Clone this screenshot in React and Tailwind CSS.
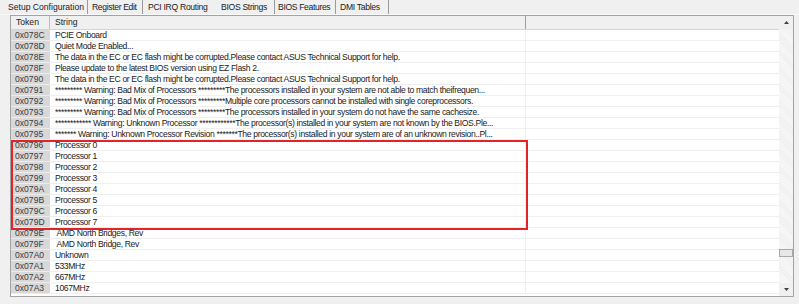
const tabs = [
  ['Setup Configuration', 'w-[83px] pl-[3px]'],
  ['Register Edit', 'w-[55px] pl-[4px] tracking-[-0.35px]'],
  ['PCI IRQ Routing', 'w-[72px] pl-[5px] tracking-[-0.3px]'],
  ['BIOS Strings', 'w-[60px] pl-[6px] tracking-[-0.3px]'],
  ['BIOS Features', 'w-[61px] pl-[3px] tracking-[-0.35px]'],
  ['DMI Tables', 'w-[53px] pl-[4px] tracking-[-0.3px]'],
];

const rows = [
  ['0x078C', 'PCIE Onboard'],
  ['0x078D', 'Quiet Mode Enabled...'],
  ['0x078E', 'The data in the EC or EC flash might be corrupted.Please contact ASUS Technical Support for help.'],
  ['0x078F', 'Please update to the latest BIOS version using EZ Flash 2.'],
  ['0x0790', 'The data in the EC or EC flash might be corrupted.Please contact ASUS Technical Support for help.'],
  ['0x0791', '********* Warning: Bad Mix of Processors *********The processors installed in your system are not able to match theifrequen...'],
  ['0x0792', '********* Warning: Bad Mix of Processors *********Multiple core processors cannot be installed with single coreprocessors.'],
  ['0x0793', '********* Warning: Bad Mix of Processors *********The processors installed in your system do not have the same cachesize.'],
  ['0x0794', '************ Warning: Unknown Processor ************The processor(s) installed in your system are not known by the BIOS.Ple...'],
  ['0x0795', '******* Warning: Unknown Processor Revision *******The processor(s) installed in your system are of an unknown revision..Pl...'],
  ['0x0796', 'Processor 0'],
  ['0x0797', 'Processor 1'],
  ['0x0798', 'Processor 2'],
  ['0x0799', 'Processor 3'],
  ['0x079A', 'Processor 4'],
  ['0x079B', 'Processor 5'],
  ['0x079C', 'Processor 6'],
  ['0x079D', 'Processor 7'],
  ['0x079E', ' AMD North Bridges, Rev'],
  ['0x079F', ' AMD North Bridge, Rev'],
  ['0x07A0', 'Unknown'],
  ['0x07A1', '533MHz'],
  ['0x07A2', '667MHz'],
  ['0x07A3', '1067MHz'],
];

const Arrow = ({ down }) => (
  <svg width="5" height="3" viewBox="0 0 5 3" className={down ? 'rotate-180' : ''}>
    <path d="M2.5 0 L5 3 L0 3 Z" fill="#404040" />
  </svg>
);

export default function App() {
  return (
    <div className="w-[799px] h-[304px] bg-[#f0f0f0] overflow-hidden font-['Liberation_Sans',Arial,sans-serif] text-[8.6px] leading-[11px] text-[#1a1a1a]">
      {/* tabs */}
      <div className="flex h-[14px] items-end pl-[5px]">
        {tabs.map(([t, cls], i) => (
          <div
            key={t}
            className={`h-[14px] flex items-center whitespace-nowrap ${cls} ${i === 2 ? '' : 'border-r border-[#9a9a9a]'}`}
          >
            {t}
          </div>
        ))}
      </div>

      {/* panel */}
      <div className="border-t border-[#fafafa] h-[290px]">
        <div className="relative ml-[10px] w-[784px] h-[282px] border border-[#a3a3a3] bg-white flex">
          <div className="flex flex-col w-[768px]">
            {/* header */}
            <div className="flex h-[14px] bg-[#f0f0f0] border-b border-[#d5d5d5]">
              <div className="w-[39px] pl-[5px] border-r border-[#bdbdbd] flex items-center">Token</div>
              <div className="w-[476px] pl-[5px] border-r border-[#9f9f9f] flex items-center">String</div>
              <div className="flex-1" />
            </div>
            {rows.map(([tok, str]) => (
              <div key={tok} className="flex h-[11px]">
                <div className="w-[39px] pl-[4px] bg-[#d8d8d8] text-[#3a3a3a] border-b border-[#ececec]">{tok}</div>
                <div className="w-[476px] pl-[5px] border-b border-r border-[#efefef] whitespace-pre overflow-hidden tracking-[-0.35px]">{str}</div>
                <div className="flex-1 border-b border-[#efefef]" />
              </div>
            ))}
          </div>

          {/* scrollbar */}
          <div className="w-[14px] flex flex-col bg-[#f6f6f6] bg-[repeating-linear-gradient(45deg,#f8f8f8_0px,#f8f8f8_1px,#efefef_1px,#efefef_2px)]">
            <div className="h-[13px] bg-[#f0f0f0] flex items-center justify-center">
              <Arrow />
            </div>
            <div className="flex-1 relative">
              <div className="absolute left-0 right-0 top-[220px] h-[8px] border border-[#a8a8a8] bg-[#e8e8e8]" />
            </div>
            <div className="h-[13px] bg-[#f0f0f0] flex items-center justify-center">
              <Arrow down />
            </div>
          </div>

          {/* annotation box */}
          <div className="absolute left-0 top-[124px] w-[517px] h-[90px] border-2 border-[#e3232a]" />
        </div>
      </div>
    </div>
  );
}
